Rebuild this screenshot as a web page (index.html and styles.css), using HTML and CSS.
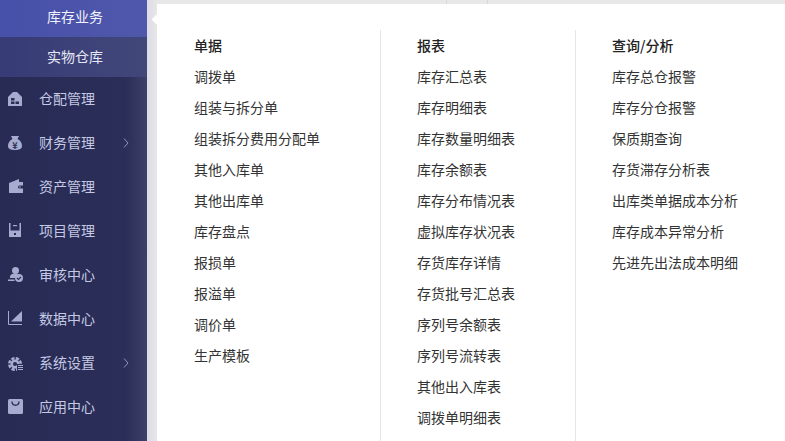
FILE: index.html
```html
<!DOCTYPE html>
<html lang="zh-CN">
<head>
    <meta charset="UTF-8">
    <title>库存业务</title>
    <link rel="stylesheet" href="styles.css">
</head>
<body>
    <div class="sidebar">
        <div class="sub-item sub-active">库存业务</div>
        <div class="sub-item">实物仓库</div>
        <div class="nav">
            <div class="nav-item">
                <svg class="nav-icon" viewBox="0 0 16 16"><path fill="#a6abcf" d="M5 1h4l5 5v9H0V6z"/><path fill="#2a2e57" d="M3 7h3.500v2.500H3zM3 10.500h3.500V13H3zM7.500 10.500H11V13H7.500z"/></svg>
                <span>仓配管理</span>
            </div>
            <div class="nav-item">
                <svg class="nav-icon" viewBox="0 0 16 16"><path fill="#a6abcf" d="M3 1h8L9.500 4C12.500 5.500 14 8 14 11c0 3-3 4-7 4s-7-1-7-4c0-3 1.500-5.500 4.500-7z"/><text x="7" y="13.500" class="yen">¥</text></svg>
                <span>财务管理</span>
                <svg class="arrow" viewBox="0 0 6 10"><path d="M1 .5 5 5 1 9.500" fill="none" stroke="#8f94bb"/></svg>
            </div>
            <div class="nav-item">
                <svg class="nav-icon" viewBox="0 0 16 16"><path fill="#a6abcf" d="M1 4 11 0v3h4v3.500h-3.500a1.500 1.500 0 0 0 0 3H15V14H1z"/><circle cx="12" cy="8" r=".8" fill="#a6abcf"/></svg>
                <span>资产管理</span>
            </div>
            <div class="nav-item">
                <svg class="nav-icon" viewBox="0 0 16 16"><path fill="#a6abcf" fill-rule="evenodd" d="M1 0h12v14H1zM2.500 0v7.500h9V0zM6 10h2v2H6z"/><path fill="#a6abcf" d="M5 2h4v1.200H5z"/></svg>
                <span>项目管理</span>
            </div>
            <div class="nav-item">
                <svg class="nav-icon" viewBox="0 0 16 16"><circle cx="7.500" cy="3.500" r="3.500" fill="#a6abcf"/><path fill="#a6abcf" d="M2 10c0-2.500 2.500-3.500 5.500-3.500 1.500 0 2 .3 2.500.5L7 11H2zM0 12.500h6.500V14H0z"/><circle cx="11" cy="11" r="4" fill="#a6abcf"/><path d="M9 11l1.500 1.500L13 9.800" fill="none" stroke="#2a2e57" stroke-width="1.200"/></svg>
                <span>审核中心</span>
            </div>
            <div class="nav-item">
                <svg class="nav-icon" viewBox="0 0 16 16"><path fill="#a6abcf" d="M3 10.500 14 0v10.500z"/><path fill="none" stroke="#a6abcf" d="M.5 0v13.500H14"/></svg>
                <span>数据中心</span>
            </div>
            <div class="nav-item">
                <svg class="nav-icon" viewBox="0 0 16 16"><circle cx="7" cy="9" r="5.700" fill="none" stroke="#a6abcf" stroke-width="2.600" stroke-dasharray="3.200 1.300"/><circle cx="7" cy="9" r="3.300" fill="none" stroke="#a6abcf" stroke-width="2.400"/><path fill="#2a2e57" d="M9 9h7v7H9z"/><path fill="#a6abcf" d="M10 10h5v1h-5zM10 12h5v1h-5zM10 14h5v1h-5z"/></svg>
                <span>系统设置</span>
                <svg class="arrow" viewBox="0 0 6 10"><path d="M1 .5 5 5 1 9.500" fill="none" stroke="#8f94bb"/></svg>
            </div>
            <div class="nav-item">
                <svg class="nav-icon" viewBox="0 0 16 16"><rect width="15" height="15" rx="1.500" fill="#a6abcf"/><path d="M4 2.500C4 7.500 11 7.500 11 2.500" fill="none" stroke="#2a2e57" stroke-width="1.300"/></svg>
                <span>应用中心</span>
            </div>
        </div>
    </div>

    <div class="main">
        <div class="tabs">
            <div class="tab-line first"></div>
            <div class="tab-line"></div>
        </div>
        <div class="panel">
            <div class="notch"></div>
            <div class="col col-bills">
                <div class="col-title">单据</div>
                <div class="link">调拨单</div>
                <div class="link">组装与拆分单</div>
                <div class="link">组装拆分费用分配单</div>
                <div class="link">其他入库单</div>
                <div class="link">其他出库单</div>
                <div class="link">库存盘点</div>
                <div class="link">报损单</div>
                <div class="link">报溢单</div>
                <div class="link">调价单</div>
                <div class="link">生产模板</div>
            </div>
            <div class="col col-reports">
                <div class="col-title">报表</div>
                <div class="link">库存汇总表</div>
                <div class="link">库存明细表</div>
                <div class="link">库存数量明细表</div>
                <div class="link">库存余额表</div>
                <div class="link">库存分布情况表</div>
                <div class="link">虚拟库存状况表</div>
                <div class="link">存货库存详情</div>
                <div class="link">存货批号汇总表</div>
                <div class="link">序列号余额表</div>
                <div class="link">序列号流转表</div>
                <div class="link">其他出入库表</div>
                <div class="link">调拨单明细表</div>
            </div>
            <div class="col col-query">
                <div class="col-title">查询/分析</div>
                <div class="link">库存总仓报警</div>
                <div class="link">库存分仓报警</div>
                <div class="link">保质期查询</div>
                <div class="link">存货滞存分析表</div>
                <div class="link">出库类单据成本分析</div>
                <div class="link">库存成本异常分析</div>
                <div class="link">先进先出法成本明细</div>
            </div>
        </div>
    </div>
</body>
</html>
```

FILE: styles.css
```css
* {
    margin: 0;
    padding: 0;
    box-sizing: border-box;
}

html,
body {
    height: 100%;
    overflow: hidden;
}

body {
    display: flex;
    font-family: "Noto Sans CJK SC", "Liberation Sans", sans-serif;
    font-size: 14px;
    background: linear-gradient(90deg, #dcdde5 147px, #e6e6ea 157px);
}

.sidebar {
    width: 147px;
    height: 441px;
    flex-shrink: 0;
    background: linear-gradient(90deg, #282c55 0%, #2a2e58 85%, #3d4068 100%);
    overflow: hidden;
}

.sub-item {
    height: 40px;
    line-height: 39px;
    text-align: center;
    padding-left: 3px;
    color: #e6e8f6;
    background: linear-gradient(90deg, #373b76, #42477a);
}

.sub-active {
    height: 37px;
    line-height: 33px;
    color: #f2f3fb;
    background: linear-gradient(90deg, #4750a8, #5058ac);
}

.nav-item {
    display: flex;
    align-items: center;
    height: 44px;
    padding-left: 8px;
    color: #c5c9e4;
}

.nav-item span {
    margin-top: -2px;
}

.nav-icon {
    width: 16px;
    height: 16px;
    margin-right: 15px;
}

.yen {
    font-size: 9px;
    font-weight: 700;
    text-anchor: middle;
    fill: #2a2e57;
}

.arrow {
    width: 6px;
    height: 10px;
    margin-left: 28px;
}

.main {
    flex: 1;
    padding-left: 10px;
}

.tabs {
    display: flex;
    height: 4px;
    padding-left: 289px;
    background-color: #e8e8e8;
}

.tab-line {
    width: 1px;
    background-color: #d8d8d8;
}

.tab-line.first {
    margin-right: 40px;
}

.panel {
    position: relative;
    display: flex;
    height: 437px;
    padding-top: 26px;
    background-color: #fff;
    color: #333;
}

.notch {
    position: absolute;
    left: -4px;
    top: 12px;
    width: 7px;
    height: 7px;
    background-color: #fff;
    transform: rotate(45deg);
}

.col {
    height: 411px;
    padding-left: 37px;
}

.col-bills {
    width: 223px;
}

.col-reports {
    width: 195px;
    border-left: 1px solid #e3e6ec;
    padding-left: 36px;
}

.col-query {
    flex: 1;
    border-left: 1px solid #e3e6ec;
    padding-left: 36px;
}

.col-title {
    height: 31px;
    line-height: 31px;
    font-weight: 500;
    color: #222;
}

.link {
    height: 31px;
    line-height: 31px;
    white-space: nowrap;
}
```
